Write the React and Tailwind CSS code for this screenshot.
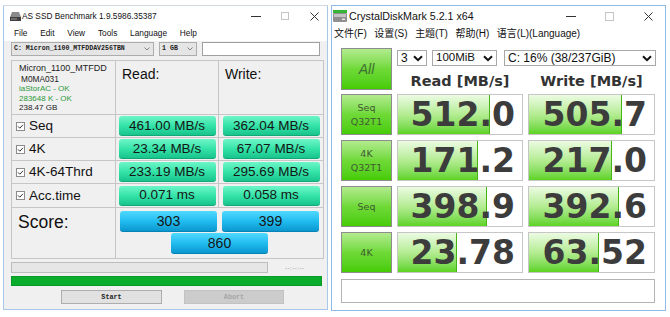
import React from "react";

const SANS = "font-['Liberation_Sans',Arial,sans-serif]";
const CJK = "font-['Liberation_Sans','Noto_Sans_CJK_SC',sans-serif]";
const MONO = "font-['Liberation_Mono','Courier_New',monospace]";
const HEAVY = "font-['DejaVu_Sans',Verdana,sans-serif]";

const asRows = [
  { label: "Seq", read: "461.00 MB/s", write: "362.04 MB/s" },
  { label: "4K", read: "23.34 MB/s", write: "67.07 MB/s" },
  { label: "4K-64Thrd", read: "233.19 MB/s", write: "295.69 MB/s" },
  { label: "Acc.time", read: "0.071 ms", write: "0.058 ms" },
];

const cdmRows = [
  { label: ["Seq", "Q32T1"], read: "512.0", write: "505.7" },
  { label: ["4K", "Q32T1"], read: "171.2", write: "217.0" },
  { label: ["Seq"], read: "398.9", write: "392.6" },
  { label: ["4K"], read: "23.78", write: "63.52" },
];

// CDM draws its bar on a log scale: 0.1 MB/s .. 10000 MB/s
const fill = (v) => Math.max(0, Math.min(1, (Math.log10(parseFloat(v)) + 1) / 5));

function CloseGlyph() {
  return (
    <svg width="9" height="9" viewBox="0 0 9 9">
      <path d="M0.5 0.5l8 8M8.5 0.5l-8 8" stroke="#333" strokeWidth="1" />
    </svg>
  );
}

function CheckBox() {
  return (
    <svg width="9" height="9" viewBox="0 0 9 9">
      <rect x="0.5" y="0.5" width="8" height="8" fill="#fff" stroke="#8c8c8c" />
      <path d="M2 4.4l1.8 1.8L7 2.8" fill="none" stroke="#333" strokeWidth="1" />
    </svg>
  );
}

function SmallChevron() {
  return (
    <svg width="6" height="4" viewBox="0 0 6 4">
      <path d="M0.5 0.5L3 3l2.5-2.5" fill="none" stroke="#777" strokeWidth="0.9" />
    </svg>
  );
}

function BoldChevron() {
  return (
    <svg width="10" height="7" viewBox="0 0 10 7">
      <path d="M1 1.2l4 4 4-4" fill="none" stroke="#111" strokeWidth="2" />
    </svg>
  );
}

function AsSsd() {
  return (
    <div className="w-[325px] h-[305px] flex flex-col bg-[#f0f0f0] border border-[#a9c7e8] border-t-[#d2dae3]">
      <div className="h-[20px] shrink-0 bg-white flex items-center pl-[6px]">
        <svg width="11" height="9" viewBox="0 0 11 9">
          <path d="M2 0h7l2 5H0z" fill="#8a8a8a" />
          <rect x="0" y="5" width="11" height="4" fill="#3f3f3f" />
          <rect x="1" y="6.5" width="6" height="1" fill="#9a9a9a" />
        </svg>
        <span className="ml-[1px] text-[8.3px] leading-none text-[#111]">AS SSD Benchmark 1.9.5986.35387</span>
        <div className="ml-auto mr-[8px] flex items-center">
          <div className="w-[10px] h-px bg-[#333]" />
          <div className="ml-[20px] w-[8px] h-[8px] border border-[#c4c4c4]" />
          <div className="ml-[21px] flex">
            <CloseGlyph />
          </div>
        </div>
      </div>

      <div className="h-[15px] shrink-0 bg-white flex items-center pl-[10px] gap-[12.8px] text-[8.3px] text-[#111]">
        <span>File</span>
        <span>Edit</span>
        <span>View</span>
        <span>Tools</span>
        <span>Language</span>
        <span>Help</span>
      </div>

      <div className="flex flex-col px-[7px] pt-[1px]">
        <div className="h-[14px] flex gap-[5px]">
          <div className="w-[144px] h-full bg-[#e5e5e5] border border-[#adadad] flex items-center pl-[2px] pr-[3px]">
            <span className={`${MONO} font-bold text-[6.6px] text-[#222] leading-none`}>C: Micron_1100_MTFDDAV256TBN</span>
            <span className="ml-auto flex"><SmallChevron /></span>
          </div>
          <div className="w-[38px] h-full bg-[#e5e5e5] border border-[#adadad] flex items-center pl-[2px] pr-[3px]">
            <span className={`${MONO} font-bold text-[6.6px] text-[#222] leading-none`}>1 GB</span>
            <span className="ml-auto flex"><SmallChevron /></span>
          </div>
          <div className="w-[119px] h-full bg-white border border-[#a0a0a0]" />
        </div>

        <div className="mt-[4px] w-[313px] grid grid-cols-[104px_103px_105px] grid-rows-[54px_23px_23px_23px_24px_51px] border-t border-l border-[#c6c6c6]">
          <div className="border-r border-b border-[#c6c6c6] pl-[7px] pt-[2px] flex flex-col">
            <span className="text-[9px] leading-[11px] text-[#222]">Micron_1100_MTFDD</span>
            <span className="pl-[2px] text-[8.3px] leading-[10px] text-[#222]">M0MA031</span>
            <span className="text-[8px] leading-[9.5px] text-[#2f9a3c]">iaStorAC - OK</span>
            <span className="text-[8px] leading-[9.5px] text-[#2f9a3c]">283648 K - OK</span>
            <span className="text-[8px] leading-[9.5px] text-[#222]">238.47 GB</span>
          </div>
          <div className="border-r border-b border-[#c6c6c6] pl-[6px] pt-[1px]">
            <span className="text-[14px] leading-[16px] text-[#111]">Read:</span>
          </div>
          <div className="border-r border-b border-[#c6c6c6] pl-[6px] pt-[1px]">
            <span className="text-[14px] leading-[16px] text-[#111]">Write:</span>
          </div>

          {asRows.map((r) => (
            <React.Fragment key={r.label}>
              <div className="border-r border-b border-[#c6c6c6] flex items-center pl-[4px] gap-[4px]">
                <CheckBox />
                <span className="text-[13.5px] leading-none text-[#111]">{r.label}</span>
              </div>
              {[r.read, r.write].map((v, i) => (
                <div key={i} className="border-r border-b border-[#c6c6c6] flex items-center justify-center">
                  <div className="w-[97px] h-[20px] rounded-[3px] bg-linear-to-b from-[#6cf5c9] via-[#34e4a9] to-[#17c48c] border-b border-[#12a877] flex items-center justify-center text-[13.5px] text-[#151515] leading-none">
                    {v}
                  </div>
                </div>
              ))}
            </React.Fragment>
          ))}

          <div className="border-r border-b border-[#c6c6c6] pl-[6px] pt-[3px]">
            <span className="text-[17.5px] leading-[20px] text-[#111]">Score:</span>
          </div>
          <div className="col-span-2 border-r border-b border-[#c6c6c6] flex flex-col items-center pt-[3px] gap-[1px]">
            <div className="flex gap-[5px]">
              {["303", "399"].map((s) => (
                <div key={s} className="w-[97px] h-[21px] rounded-[3px] bg-linear-to-b from-[#4fd9ff] via-[#21bdf0] to-[#0a97cf] border-b border-[#0782b4] flex items-center justify-center text-[14px] text-[#151515] leading-none">
                  {s}
                </div>
              ))}
            </div>
            <div className="w-[97px] h-[21px] rounded-[3px] bg-linear-to-b from-[#4fd9ff] via-[#21bdf0] to-[#0a97cf] border-b border-[#0782b4] flex items-center justify-center text-[14px] text-[#151515] leading-none">
              860
            </div>
          </div>
        </div>

        <div className="mt-[3px] flex items-center">
          <div className="w-[257px] h-[11px] bg-[#e6e6e6] border border-[#bdbdbd]" />
          <span className="ml-[17px] text-[6px] leading-none text-[#888] tracking-[0.5px]">--:--:--</span>
        </div>
        <div className="mt-[3px] w-[311px] h-[10px] bg-[#0aad2b] border border-[#0a9a27]" />
        <div className="mt-[4px] flex">
          <div className={`ml-[50px] w-[101px] h-[14px] bg-[#e1e1e1] border border-[#adadad] flex items-center justify-center ${MONO} font-bold text-[6.8px] text-[#222] leading-none`}>
            Start
          </div>
          <div className={`ml-[22px] w-[100px] h-[14px] bg-[#cccccc] border border-[#c2c2c2] flex items-center justify-center ${MONO} font-bold text-[6.8px] text-[#a6a6a6] leading-none`}>
            Abort
          </div>
        </div>
      </div>
    </div>
  );
}

function GreenButton({ lines, w, h, big }) {
  return (
    <div
      className={`${w} ${h} shrink-0 border border-[#8d8d8d] bg-linear-to-b from-[#b2eb8c] via-[#6fd936] to-[#45cc00] flex flex-col items-center justify-center`}
    >
      {big ? (
        <span className="text-[14px] italic leading-none text-[#3f6f33]">{lines[0]}</span>
      ) : (
        lines.map((l) => (
          <span key={l} className={`${HEAVY} text-[9.5px] leading-[14px] text-[#3f5a33]`}>{l}</span>
        ))
      )}
    </div>
  );
}

function ValueCell({ value, w }) {
  return (
    <div className={`${w} h-full relative bg-white border border-[#c6c6c6] overflow-hidden flex items-center justify-end pr-[7px]`}>
      <div
        className="absolute left-0 top-0 bottom-0 bg-linear-to-b from-[#ecfbe3] via-[#b4ec92] to-[#5cd31b] border-r border-[#45b515]"
        style={{ width: `${fill(value) * 100}%` }}
      />
      <span className={`relative ${HEAVY} font-bold text-[33px] leading-none text-[#3c3c3c]`}>{value}</span>
    </div>
  );
}

function Cdm() {
  return (
    <div className="w-[335px] h-[306px] flex flex-col bg-white border border-[#8fbbe6]">
      <div className="h-[20px] shrink-0 flex items-center pl-[1px]">
        <svg width="14" height="12" viewBox="0 0 14 12">
          <rect x="0" y="0" width="14" height="3" fill="#34b834" />
          <rect x="0" y="3" width="14" height="9" rx="1" fill="#8f8f8f" />
          <rect x="1" y="4" width="12" height="3" fill="#c4c4c4" />
          <rect x="9" y="8.5" width="3" height="1.5" fill="#e8e8e8" />
        </svg>
        <span className="ml-[2px] text-[10.7px] leading-none text-[#111]">CrystalDiskMark 5.2.1 x64</span>
        <div className="ml-auto mr-[12px] flex items-center">
          <div className="w-[10px] h-px bg-[#333]" />
          <div className="ml-[29px] w-[9px] h-[9px] border border-[#c4c4c4]" />
          <div className="ml-[30px] flex">
            <CloseGlyph />
          </div>
        </div>
      </div>

      <div className={`h-[15px] shrink-0 flex items-center pl-[2px] gap-[7.5px] ${CJK} text-[10px] text-[#111]`}>
        <span>文件(F)</span>
        <span>设置(S)</span>
        <span>主题(T)</span>
        <span>帮助(H)</span>
        <span>语言(L)(Language)</span>
      </div>

      <div className="flex flex-col pl-[9px] pt-[7px]">
        <div className="flex gap-[5px]">
          <GreenButton lines={["All"]} w="w-[51px]" h="h-[42px]" big />
          <div className="w-[259px] flex flex-col">
            <div className="mt-[2px] h-[16px] flex text-[12px] text-[#111]">
              <div className="w-[30px] h-full border border-[#a8a8a8] flex items-center pl-[3px] pr-[3px]">
                <span className="leading-none">3</span>
                <span className="ml-auto flex"><BoldChevron /></span>
              </div>
              <div className="ml-[5px] w-[65px] h-full border border-[#a8a8a8] flex items-center pl-[3px] pr-[3px]">
                <span className="leading-none text-[11.5px]">100MiB</span>
                <span className="ml-auto flex"><BoldChevron /></span>
              </div>
              <div className="ml-[7px] w-[152px] h-full border border-[#a8a8a8] flex items-center pl-[3px] pr-[3px]">
                <span className="leading-none">C: 16% (38/237GiB)</span>
                <span className="ml-auto flex"><BoldChevron /></span>
              </div>
            </div>
            <div className={`mt-[8px] h-[16px] flex gap-[5px] ${HEAVY} font-bold text-[14.5px] leading-none text-[#333]`}>
              <span className="w-[126px] text-center">Read [MB/s]</span>
              <span className="w-[127px] text-center">Write [MB/s]</span>
            </div>
          </div>
        </div>

        <div className="mt-[4px] flex flex-col gap-[5px]">
          {cdmRows.map((r) => (
            <div key={r.read} className="h-[41px] flex gap-[5px]">
              <GreenButton lines={r.label} w="w-[51px]" h="h-full" />
              <ValueCell value={r.read} w="w-[126px]" />
              <ValueCell value={r.write} w="w-[127px]" />
            </div>
          ))}
        </div>

        <div className="mt-[6px] w-[314px] h-[24px] bg-white border border-[#b4b4b4]" />
      </div>
    </div>
  );
}

export default function App() {
  return (
    <div className={`w-[670px] h-[317px] bg-white flex items-start pt-[5px] pl-[3px] gap-[3px] ${SANS}`}>
      <AsSsd />
      <Cdm />
    </div>
  );
}
